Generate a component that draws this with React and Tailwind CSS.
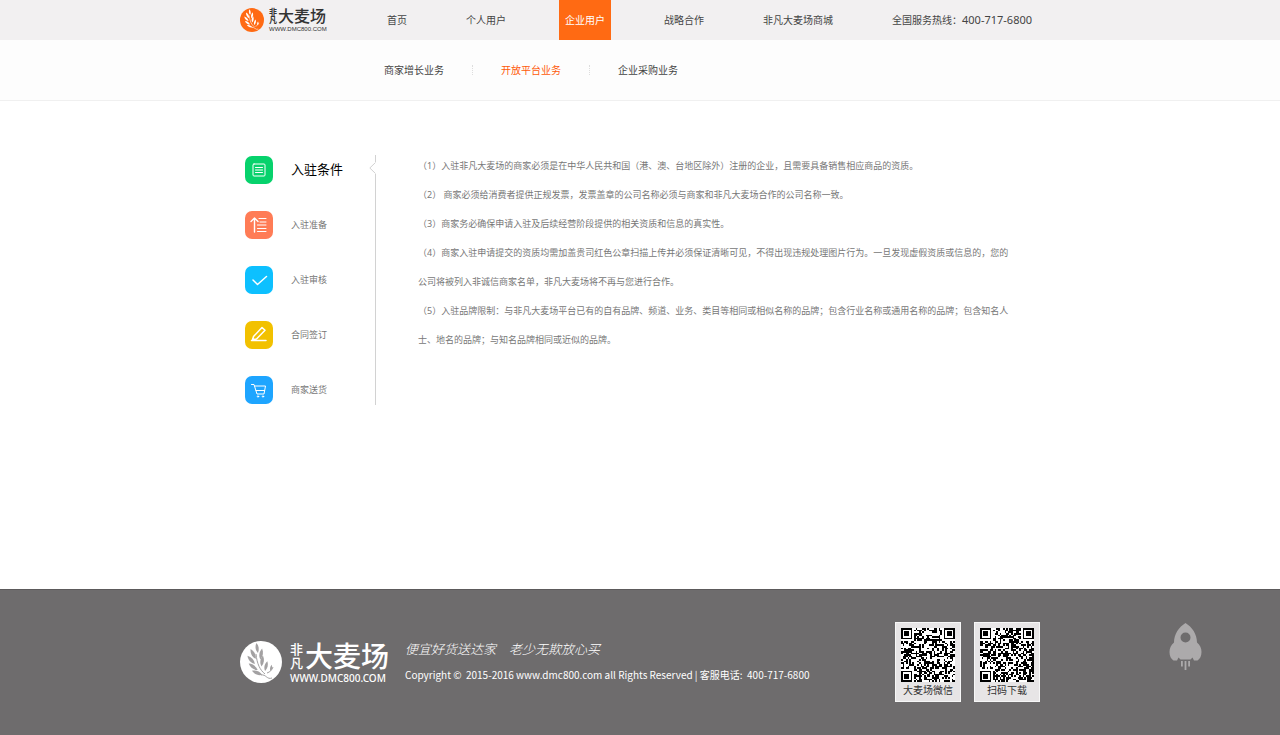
import React, { useState } from "react";
import clsx from "clsx";

const NAV = ["首页", "个人用户", "企业用户", "战略合作", "非凡大麦场商城"];
const SUB_NAV = ["商家增长业务", "开放平台业务", "企业采购业务"];

const RULES = [
  "（1）入驻非凡大麦场的商家必须是在中华人民共和国（港、澳、台地区除外）注册的企业，且需要具备销售相应商品的资质。",
  "（2） 商家必须给消费者提供正规发票，发票盖章的公司名称必须与商家和非凡大麦场合作的公司名称一致。",
  "（3）商家务必确保申请入驻及后续经营阶段提供的相关资质和信息的真实性。",
  "（4）商家入驻申请提交的资质均需加盖贵司红色公章扫描上传并必须保证清晰可见，不得出现违规处理图片行为。一旦发现虚假资质或信息的，您的公司将被列入非诚信商家名单，非凡大麦场将不再与您进行合作。",
  "（5）入驻品牌限制：与非凡大麦场平台已有的自有品牌、频道、业务、类目等相同或相似名称的品牌；包含行业名称或通用名称的品牌；包含知名人士、地名的品牌；与知名品牌相同或近似的品牌。",
];

const STEPS = [
  {
    label: "入驻条件",
    color: "bg-[#07d26c]",
    icon: (
      <>
        <rect x="8" y="8" width="12" height="12" rx="1" />
        <path d="M10.5 11.5h7M10.5 14h7M10.5 16.5h7" />
      </>
    ),
  },
  {
    label: "入驻准备",
    color: "bg-[#ff7c56]",
    icon: (
      <>
        <path d="M9.5 21V7M6 10.5 9.5 7l3.500 3.500" strokeWidth="1.400" />
        <path d="M14 7.500h7M15 11h6M12.500 14h8.500M12.500 17.500h8.500M12.500 20.500h8.500" />
      </>
    ),
  },
  {
    label: "入驻审核",
    color: "bg-[#0dc0ff]",
    icon: <path d="m8 14 4.500 4.500 9-8" strokeWidth="1.500" />,
  },
  {
    label: "合同签订",
    color: "bg-[#f2c100]",
    icon: (
      <>
        <path d="m8.500 15.500 8.500-9 3 2.800-8.500 8.700-4 .8z" strokeWidth="1.500" />
        <path d="M6.500 19.500H21" strokeWidth="1.500" />
      </>
    ),
  },
  {
    label: "商家送货",
    color: "bg-[#1ea5ff]",
    icon: (
      <>
        <path d="M6.500 8.500H9l3 9.500h7l1.500-8H9.700M11 14.500h8.500" />
        <circle cx="13" cy="20.500" r=".7" />
        <circle cx="18" cy="20.500" r=".7" />
      </>
    ),
  },
];

// x, y, angle and scale of every grain on the ear
const GRAINS = [
  [17, 7, -6, 0.9],
  [13, 13, -26, 1],
  [21, 13, 12, 1],
  [11, 19, -40, 1],
  [22, 20, 10, 1],
  [13, 26, -52, 1],
  [26, 25, 16, 0.9],
  [17, 32, -66, 1],
  [31, 27, 12, 0.6],
];

function WheatMark({ className, disc, grain }) {
  return (
    <svg viewBox="0 0 42 42" className={className} aria-hidden="true">
      <circle cx="21" cy="21" r="21" fill={disc} />
      <path d="M16 13c1 10 4 16 9 20M21 34c5-1 6 5 11 3M27 32c3-1 5-3 6-6" fill="none" stroke={grain} strokeWidth="1" />
      {GRAINS.map(([x, y, angle, scale], i) => (
        <path
          key={i}
          d="M0-5.500C2.400-2 2.500 2 .5 5.500-2.200 2.500-2.200-2 0-5.500z"
          fill={grain}
          transform={`translate(${x} ${y}) rotate(${angle}) scale(${scale})`}
        />
      ))}
    </svg>
  );
}

function isFinder(x, y, n) {
  const near = (cx, cy) => {
    const dx = x - cx;
    const dy = y - cy;
    if (dx < -1 || dy < -1 || dx > 7 || dy > 7) return null;
    const ring = Math.max(Math.abs(dx - 3), Math.abs(dy - 3));
    return ring === 3 || ring < 2;
  };
  return near(0, 0) ?? near(n - 7, 0) ?? near(0, n - 7);
}

function QrCode({ seed }) {
  const n = 33;
  let state = seed;
  let d = "";
  for (let y = 0; y < n; y++) {
    for (let x = 0; x < n; x++) {
      state = (state * 1103515245 + 12345) % 2147483648;
      const dark = isFinder(x, y, n) ?? (state >> 12) % 100 < 52;
      if (dark) d += `M${x} ${y}h1v1h-1z`;
    }
  }
  return (
    <svg viewBox="0 0 33 33" className="size-[54px] bg-white" shapeRendering="crispEdges" aria-hidden="true">
      <path d={d} fill="#000" />
    </svg>
  );
}

function QrCard({ label, seed }) {
  return (
    <figure className="flex w-[66px] flex-col items-center gap-[2px] border border-[#f7f7f7] bg-[#e7e5e6] pt-[5px] pb-1">
      <QrCode seed={seed} />
      <figcaption className="text-[10px] leading-[13px] text-[#333]">{label}</figcaption>
    </figure>
  );
}

function Header() {
  const [active, setActive] = useState(2);

  return (
    <header className="bg-[#f2f0f1]">
      <div className="mx-auto flex h-10 max-w-[800px] items-center">
        <a href="#" className="flex w-[141px] shrink-0 items-center gap-[5px] text-[#333]">
          <WheatMark className="size-6" disc="#ff6a13" grain="#fff" />
          <span className="flex flex-col">
            <span className="flex items-center">
              <span className="w-[9px] text-[8px] leading-[8px] font-bold">非凡</span>
              <span className="text-[16px] leading-[18px] font-medium">大麦场</span>
            </span>
            <span className="font-['Liberation_Sans',sans-serif] text-[6px] leading-[8px]">WWW.DMC800.COM</span>
          </span>
        </a>
        <nav className="flex items-center gap-[47px] text-[10px] whitespace-nowrap text-[#444]">
          {NAV.map((item, i) => (
            <a
              key={item}
              href="#"
              onClick={() => setActive(i)}
              className={clsx("px-[6px] leading-10", i === active && "bg-[#ff6a13] text-white")}
            >
              {item}
            </a>
          ))}
          <span className="px-[6px]">
            全国服务热线：<span className="text-[11px]">400-717-6800</span>
          </span>
        </nav>
      </div>
    </header>
  );
}

function SubNav() {
  return (
    <div className="border-b border-[#f0f0f0] bg-[#fdfdfd]">
      <nav className="mx-auto flex h-[60px] max-w-[800px] items-center gap-7 pl-36 text-[10px] text-[#444]">
        {SUB_NAV.map((item, i) => (
          <React.Fragment key={item}>
            {i > 0 && <span className="h-[10px] border-l border-dotted border-[#ddd]" />}
            <a href="#" className={clsx(i === 1 && "text-[#ff5a0a]")}>
              {item}
            </a>
          </React.Fragment>
        ))}
      </nav>
    </div>
  );
}

function Steps() {
  const [current, setCurrent] = useState(0);

  return (
    <aside className="relative w-[136px] shrink-0 border-r border-[#d2d2d2] py-px pl-[5px]">
      <ul className="flex flex-col gap-[27px]">
        {STEPS.map((step, i) => (
          <li key={step.label}>
            <button onClick={() => setCurrent(i)} className="flex cursor-pointer items-center gap-[18px]">
              <span className={clsx("size-7 rounded-[7px]", step.color)}>
                <svg
                  viewBox="0 0 28 28"
                  fill="none"
                  stroke="#fff"
                  strokeLinecap="round"
                  strokeLinejoin="round"
                  className="size-7"
                  aria-hidden="true"
                >
                  {step.icon}
                </svg>
              </span>
              <span className={clsx(i === current ? "text-[13px] text-black" : "text-[9px] text-[#777]")}>
                {step.label}
              </span>
            </button>
          </li>
        ))}
      </ul>
      <svg viewBox="0 0 7 12" className="absolute top-[7px] -right-px h-3 w-[7px]" aria-hidden="true">
        <path d="M6 0h1v12H6z" fill="#fff" />
        <path d="M6.500.5.800 6l5.700 5.500" fill="none" stroke="#d2d2d2" />
      </svg>
    </aside>
  );
}

function Footer() {
  return (
    <footer className="border-t border-[#5c5a5b] bg-[#6e6c6d] pt-8 pb-[33px] text-white">
      <div className="mx-auto flex max-w-[800px] items-center">
        <a href="#" className="flex w-[165px] shrink-0 items-center gap-2">
          <WheatMark className="size-[42px]" disc="#fff" grain="#a3a1a2" />
          <span className="flex flex-col">
            <span className="flex items-center gap-[2px]">
              <span className="w-[13px] text-[13px] leading-[14px] font-medium">非凡</span>
              <span className="text-[28px] leading-8 font-medium">大麦场</span>
            </span>
            <span className="text-[10px] leading-[12px] font-medium">WWW.DMC800.COM</span>
          </span>
        </a>
        <div className="flex flex-col gap-[10px] whitespace-nowrap">
          <p className="text-[13px] leading-4 font-light italic">便宜好货送达家　老少无欺放心买</p>
          <p className="font-['Noto_Sans_CJK_SC',sans-serif] text-[10px] leading-4">
            Copyright ©&nbsp; 2015-2016 www.dmc800.com all Rights Reserved | 客服电话:&nbsp; 400-717-6800
          </p>
        </div>
        <div className="ml-auto flex gap-[13px]">
          <QrCard label="大麦场微信" seed={7321} />
          <QrCard label="扫码下载" seed={90817} />
        </div>
      </div>
    </footer>
  );
}

function BackToTop() {
  return (
    <button
      aria-label="返回顶部"
      onClick={() => window.scrollTo({ top: 0, behavior: "smooth" })}
      className="fixed right-[78px] bottom-[65px] cursor-pointer"
    >
      <svg viewBox="0 0 33 47" className="h-[47px] w-[33px]" fill="#acaaab" aria-hidden="true">
        <path
          fillRule="evenodd"
          d="M16.500 0C10 4 5 11 5 19.500 2 22 .500 25 .500 29c0 4 1.500 7 4 8.500h3.500l1.500-3 2 2h10l2-2 1.500 3h3.500c2.500-1.500 4-4.500 4-8.500 0-4-1.500-7-4.500-9.500C28 11 23 4 16.500 0zm0 9.500a5 5 0 1 1 0 10 5 5 0 0 1 0-10z"
        />
        <path d="M12 38h1.800v5.500H12zM15.600 38h1.800v9h-1.800zM19.200 38H21v5.500h-1.800z" />
      </svg>
    </button>
  );
}

export default function App() {
  return (
    <div className="flex min-h-screen flex-col bg-white font-['Noto_Sans','Noto_Sans_CJK_SC',sans-serif]">
      <Header />
      <SubNav />
      <main className="mx-auto flex w-full max-w-[800px] flex-1 items-start gap-[42px] pt-[54px] pb-10">
        <Steps />
        <article className="-mt-1 max-w-[596px] text-[9px] leading-[29px] text-[#777]">
          {RULES.map((rule) => (
            <p key={rule}>{rule}</p>
          ))}
        </article>
      </main>
      <Footer />
      <BackToTop />
    </div>
  );
}
